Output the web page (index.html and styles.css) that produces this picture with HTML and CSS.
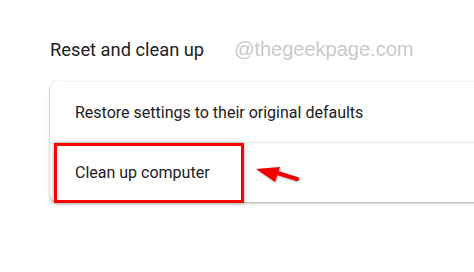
FILE: index.html
```html
<!DOCTYPE html>
<html lang="en">
<head>
  <meta charset="UTF-8" />
  <title>Reset and clean up</title>
  <link rel="stylesheet" href="styles.css">
</head>
<body>
  <div class="page">
    <!-- Section title with watermark -->
    <div class="section-head">
      <h2 class="section-title">Reset and clean up</h2>
      <span class="watermark">@thegeekpage.com</span>
    </div>
    <!-- Settings card -->
    <div class="card">
      <div class="row">Restore settings to their original defaults</div>
      <div class="row row-marked">
        Clean up computer
        <div class="highlight"></div>
        <svg class="arrow" width="50" height="24" viewBox="0 0 50 24">
          <path d="M47 17 L24 10" stroke="#f20000" stroke-width="4" stroke-linecap="round" fill="none"/>
          <path d="M6 7 L30 5 L25 20 Z" fill="#f20000"/>
        </svg>
      </div>
    </div>
  </div>
</body>
</html>
```

FILE: styles.css
```css
* { margin: 0; padding: 0; box-sizing: border-box; }
body {
  background: #fff;
  font-family: Roboto, 'Noto Sans', sans-serif;
  overflow: hidden;
}
.page {
  padding: 38px 0 20px 50px;
  overflow: hidden;
}
.section-head {
  display: flex;
  align-items: baseline;
  gap: 30px;
  height: 44px;
}
.section-title {
  font-size: 18.3px;
  font-weight: 400;
  color: #202124;
}
.watermark {
  font-family: 'Liberation Sans', Arial, sans-serif;
  font-size: 20px;
  color: #cacaca;
}
.card {
  margin-right: -20px;
  background: #fff;
  border-radius: 8px;
  box-shadow: 0 1px 2px rgba(60,64,67,0.3), 0 1px 3px 1px rgba(60,64,67,0.15);
}
.row {
  position: relative;
  height: 60px;
  display: flex;
  align-items: center;
  padding-left: 25px;
  font-size: 16px;
  color: #202124;
}
.row + .row {
  border-top: 1px solid #e8eaed;
}
.highlight {
  position: absolute;
  left: 4px;
  top: 0;
  width: 190px;
  height: 60px;
  border: 3px solid #ff0000;
  box-shadow: 0 0 4px rgba(0,0,0,0.35);
}
.arrow {
  position: absolute;
  left: 200px;
  top: 19px;
  filter: drop-shadow(1px 1px 1px rgba(0,0,0,0.3));
}
```
